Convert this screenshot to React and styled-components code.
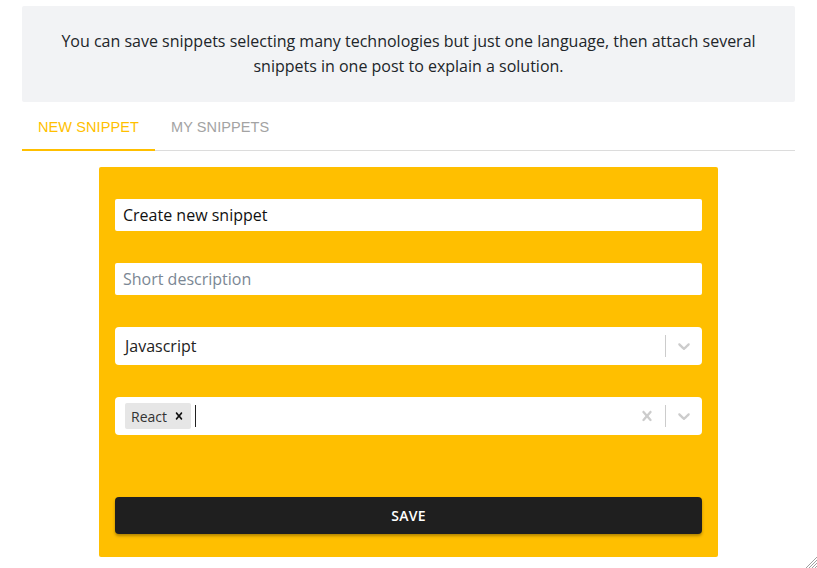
import React from "react";
import styled, { createGlobalStyle } from "styled-components";

const Global = createGlobalStyle`
  html, body { margin: 0; padding: 0; background: #fff; }
  body { font-family: "Open Sans", "Liberation Sans", sans-serif; height: 568px; overflow: hidden; }
  * { box-sizing: border-box; }
`;

const Page = styled.div`
  width: 817px;
  height: 568px;
  position: relative;
  padding: 6px 22px 0 22px;
`;

const Banner = styled.div`
  background: #f2f3f5;
  border-radius: 2px;
  height: 96px;
  display: flex;
  align-items: center;
  justify-content: center;
  text-align: center;
  padding: 0 28px;
  font-size: 16px;
  line-height: 25px;
  color: #212529;
`;

const Tabs = styled.div`
  display: flex;
  height: 49px;
  border-bottom: 1px solid #dcdcdc;
`;

const Tab = styled.div`
  padding: 0 16px;
  display: flex;
  align-items: center;
  font-family: "Liberation Sans", Arial, sans-serif;
  font-size: 14.5px;
  letter-spacing: 0.1px;
  color: ${(p) => (p.$active ? "#ffbf00" : "#a3a3a3")};
  border-bottom: 2px solid ${(p) => (p.$active ? "#ffbf00" : "transparent")};
  margin-bottom: -1px;
  padding-top: 3px;
`;

const Card = styled.form`
  width: 619px;
  margin: 16px 0 0 77px;
  background: #ffbf00;
  border-radius: 2px;
  padding: 32px 16px 23px;
  display: flex;
  flex-direction: column;
`;

const TextInput = styled.input`
  height: 32px;
  border: none;
  border-radius: 2px;
  background: #fff;
  padding: 0 8px;
  font-family: "Open Sans", sans-serif;
  font-size: 16px;
  color: #111;
  margin-bottom: 32px;
  outline: none;
  &::placeholder { color: #7b8794; }
`;

const Select = styled.div`
  height: 38px;
  background: #fff;
  border-radius: 4px;
  display: flex;
  align-items: center;
  margin-bottom: ${(p) => p.$mb}px;
`;

const ValueArea = styled.div`
  flex: 1;
  display: flex;
  align-items: center;
  padding: 0 10px;
  font-size: 16px;
  color: #222;
  gap: 4px;
`;

const Chip = styled.div`
  display: flex;
  align-items: center;
  background: #e6e6e6;
  border-radius: 2px;
  height: 26px;
  padding: 0 0 0 6px;
  font-size: 14px;
  color: #333;
`;

const ChipRemove = styled.span`
  width: 24px;
  display: flex;
  justify-content: center;
  align-items: center;
`;

const Caret = styled.span`
  width: 1px;
  height: 22px;
  background: #222;
`;

const Indicators = styled.div`
  display: flex;
  align-items: center;
  height: 100%;
`;

const IndicatorBtn = styled.div`
  width: 36px;
  height: 100%;
  display: flex;
  align-items: center;
  justify-content: center;
`;

const Sep = styled.span`
  width: 1px;
  height: 22px;
  background: #cccccc;
`;

const Spacer = styled.div`
  height: 62px;
`;

const SaveButton = styled.button`
  height: 37px;
  border: none;
  border-radius: 4px;
  background: #1f1f1f;
  color: #fff;
  font-family: "Open Sans", sans-serif;
  font-weight: 600;
  font-size: 14px;
  letter-spacing: 0.3px;
  box-shadow: 0 2px 3px rgba(0, 0, 0, 0.3);
`;

const Grip = styled.svg`
  position: absolute;
  right: 0;
  bottom: 0;
`;

const Chevron = () => (
  <svg width="20" height="20" viewBox="0 0 20 20">
    <path
      fill="#cccccc"
      d="M4.516 7.548c0.436-0.446 1.043-0.481 1.576 0l3.908 3.747 3.908-3.747c0.533-0.481 1.141-0.446 1.574 0 0.436 0.445 0.408 1.197 0 1.615-0.406 0.418-4.695 4.502-4.695 4.502-0.217 0.223-0.502 0.335-0.787 0.335s-0.57-0.112-0.789-0.335c0 0-4.287-4.084-4.695-4.502s-0.436-1.170 0-1.615z"
    />
  </svg>
);

const Cross = ({ size = 20, color = "#cccccc" }) => (
  <svg width={size} height={size} viewBox="0 0 20 20">
    <path
      fill={color}
      d="M14.348 14.849c-0.469 0.469-1.229 0.469-1.697 0l-2.651-3.030-2.651 3.029c-0.469 0.469-1.229 0.469-1.697 0-0.469-0.469-0.469-1.229 0-1.697l2.758-3.15-2.759-3.152c-0.469-0.469-0.469-1.228 0-1.697s1.228-0.469 1.697 0l2.652 3.031 2.651-3.031c0.469-0.469 1.228-0.469 1.697 0s0.469 1.229 0 1.697l-2.758 3.152 2.758 3.150c0.469 0.469 0.469 1.229 0 1.698z"
    />
  </svg>
);

export default function App() {
  return (
    <>
      <Global />
      <Page>
        <Banner>
          You can save snippets selecting many technologies but just one language, then attach several snippets in one post to explain a solution.
        </Banner>
        <Tabs>
          <Tab $active>NEW SNIPPET</Tab>
          <Tab>MY SNIPPETS</Tab>
        </Tabs>
        <Card onSubmit={(e) => e.preventDefault()}>
          <TextInput defaultValue="Create new snippet" />
          <TextInput placeholder="Short description" />
          <Select $mb={32}>
            <ValueArea>Javascript</ValueArea>
            <Indicators>
              <Sep />
              <IndicatorBtn>
                <Chevron />
              </IndicatorBtn>
            </Indicators>
          </Select>
          <Select $mb={0}>
            <ValueArea>
              <Chip>
                React
                <ChipRemove>
                  <Cross size={14} color="#111" />
                </ChipRemove>
              </Chip>
              <Caret />
            </ValueArea>
            <Indicators>
              <IndicatorBtn>
                <Cross />
              </IndicatorBtn>
              <Sep />
              <IndicatorBtn>
                <Chevron />
              </IndicatorBtn>
            </Indicators>
          </Select>
          <Spacer />
          <SaveButton type="submit">SAVE</SaveButton>
        </Card>
        <Grip width="12" height="12" viewBox="0 0 12 12">
          <path d="M12 1 L1 12 M12 4 L4 12 M12 7 L7 12 M12 10 L10 12" stroke="#a0a0a0" strokeWidth="1" />
        </Grip>
      </Page>
    </>
  );
}
